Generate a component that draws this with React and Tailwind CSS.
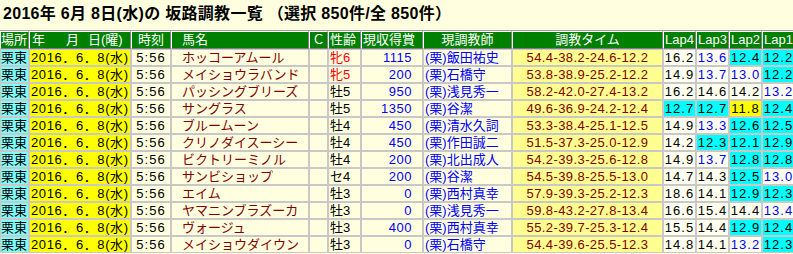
import React from 'react';

const rows = [
  { name: 'ホッコーアムール', sex: '牝6', prize: '1115', trainer: '(栗)飯田祐史', time: '54.4-38.2-24.6-12.2', laps: ['16.2', '13.6', '12.4', '12.2'] },
  { name: 'メイショウラバンド', sex: '牝5', prize: '200', trainer: '(栗)石橋守', time: '53.8-38.9-25.2-12.2', laps: ['14.9', '13.7', '13.0', '12.2'] },
  { name: 'パッシングブリーズ', sex: '牡5', prize: '950', trainer: '(栗)浅見秀一', time: '58.2-42.0-27.4-13.2', laps: ['16.2', '14.6', '14.2', '13.2'] },
  { name: 'サングラス', sex: '牡5', prize: '1350', trainer: '(栗)谷潔', time: '49.6-36.9-24.2-12.4', laps: ['12.7', '12.7', '11.8', '12.4'] },
  { name: 'ブルームーン', sex: '牡4', prize: '450', trainer: '(栗)清水久詞', time: '53.3-38.4-25.1-12.5', laps: ['14.9', '13.3', '12.6', '12.5'] },
  { name: 'クリノダイスーシー', sex: '牡4', prize: '450', trainer: '(栗)作田誠二', time: '51.5-37.3-25.0-12.9', laps: ['14.2', '12.3', '12.1', '12.9'] },
  { name: 'ビクトリーミノル', sex: '牡4', prize: '200', trainer: '(栗)北出成人', time: '54.2-39.3-25.6-12.8', laps: ['14.9', '13.7', '12.8', '12.8'] },
  { name: 'サンビショップ', sex: 'セ4', prize: '200', trainer: '(栗)谷潔', time: '54.5-39.8-25.5-13.0', laps: ['14.7', '14.3', '12.5', '13.0'] },
  { name: 'エイム', sex: '牡3', prize: '0', trainer: '(栗)西村真幸', time: '57.9-39.3-25.2-12.3', laps: ['18.6', '14.1', '12.9', '12.3'] },
  { name: 'ヤマニンブラズーカ', sex: '牡3', prize: '0', trainer: '(栗)浅見秀一', time: '59.8-43.2-27.8-13.4', laps: ['16.6', '15.4', '14.4', '13.4'] },
  { name: 'ヴォージュ', sex: '牡3', prize: '400', trainer: '(栗)西村真幸', time: '55.2-39.7-25.3-12.4', laps: ['15.5', '14.4', '12.9', '12.4'], boxed: true },
  { name: 'メイショウダイウン', sex: '牡3', prize: '0', trainer: '(栗)石橋守', time: '54.4-39.6-25.5-12.3', laps: ['14.8', '14.1', '13.2', '12.3'] },
];

const cols =
  'grid grid-cols-[29px_102px_40px_138px_19px_33px_62px_89px_151px_33px_33px_33px_33px]';

const th =
  'h-[18px] leading-[16px] bg-[#008000] text-white border border-t-white border-l-white border-r-[#808080] border-b-[#808080] whitespace-nowrap overflow-hidden';
const td =
  'h-[17px] leading-[15px] border border-[#c8c8c8] whitespace-nowrap overflow-hidden';

// lap colouring: under 12 yellow, under 13 cyan, 13 台 blue text
const lapClass = (v) => {
  const n = parseFloat(v);
  if (n < 12) return 'bg-[#ffff00] text-black';
  if (n < 13) return 'bg-[#00ffff] text-black';
  if (n < 14) return 'bg-[#fffff0] text-[#0000ff]';
  return 'bg-[#fffff0] text-black';
};

export default function App() {
  return (
    <div className="w-[793px] h-[254px] overflow-hidden bg-[#ffffe0] font-['Liberation_Sans','Noto_Sans_CJK_JP',sans-serif] text-[13px] text-black">
      <div className="h-[30px] pl-[3px] pt-[3px] text-[16px] font-bold leading-[22px] tracking-[0.3px] whitespace-nowrap">
        2016年 6月 8日(水)の 坂路調教一覧 （選択 850件/全 850件）
      </div>
      <div className={`${cols} w-[795px] border-t border-[#a0a0a0]`}>
        <div className={th}>場所</div>
        <div className={`${th} pl-[2px]`}>
          年<span className="ml-[21px]">月</span>
          <span className="ml-[9px]">日(曜)</span>
        </div>
        <div className={`${th} text-center`}>時刻</div>
        <div className={`${th} pl-[10px]`}>馬名</div>
        <div className={`${th} text-center`}>Ｃ</div>
        <div className={`${th} pl-[1px]`}>性齢</div>
        <div className={`${th} pl-[1px]`}>現収得賞</div>
        <div className={`${th} text-center`}>現調教師</div>
        <div className={`${th} text-center`}>調教タイム</div>
        <div className={`${th} text-center`}>Lap4</div>
        <div className={`${th} text-center`}>Lap3</div>
        <div className={`${th} text-center`}>Lap2</div>
        <div className={`${th} text-center`}>Lap1</div>

        {rows.map((r) => (
          <React.Fragment key={r.name}>
            <div className={`${td} bg-[#80ffff]`}>栗東</div>
            <div className={`${td} bg-[#ffff00] pl-[1px] tracking-[0.6px]`}>2016．6．8(水)</div>
            <div className={`${td} text-center tracking-[1px]`}>5:56</div>
            <div className={`${td} pl-[10px] text-[#800000]`}>{r.name}</div>
            <div className={td}></div>
            <div className={`${td} pl-[1px] ${r.sex.startsWith('牝') ? 'text-[#ff0000]' : ''}`}>{r.sex}</div>
            <div className={`${td} text-right pr-[10px] text-[#0000ff] tracking-[0.5px]`}>{r.prize}</div>
            <div className={`${td} pl-[1px] text-[#0000ff]`}>{r.trainer}</div>
            <div className={`${td} text-center bg-[#ffff90] text-[#800000] tracking-[0.4px]`}>{r.time}</div>
            {r.laps.map((v, i) => (
              <div
                key={i}
                className={`${td} text-center tracking-[1px] ${lapClass(v)} ${r.boxed && i === 0 ? 'border-[#800000]' : ''}`}
              >
                {v}
              </div>
            ))}
          </React.Fragment>
        ))}
      </div>
    </div>
  );
}
